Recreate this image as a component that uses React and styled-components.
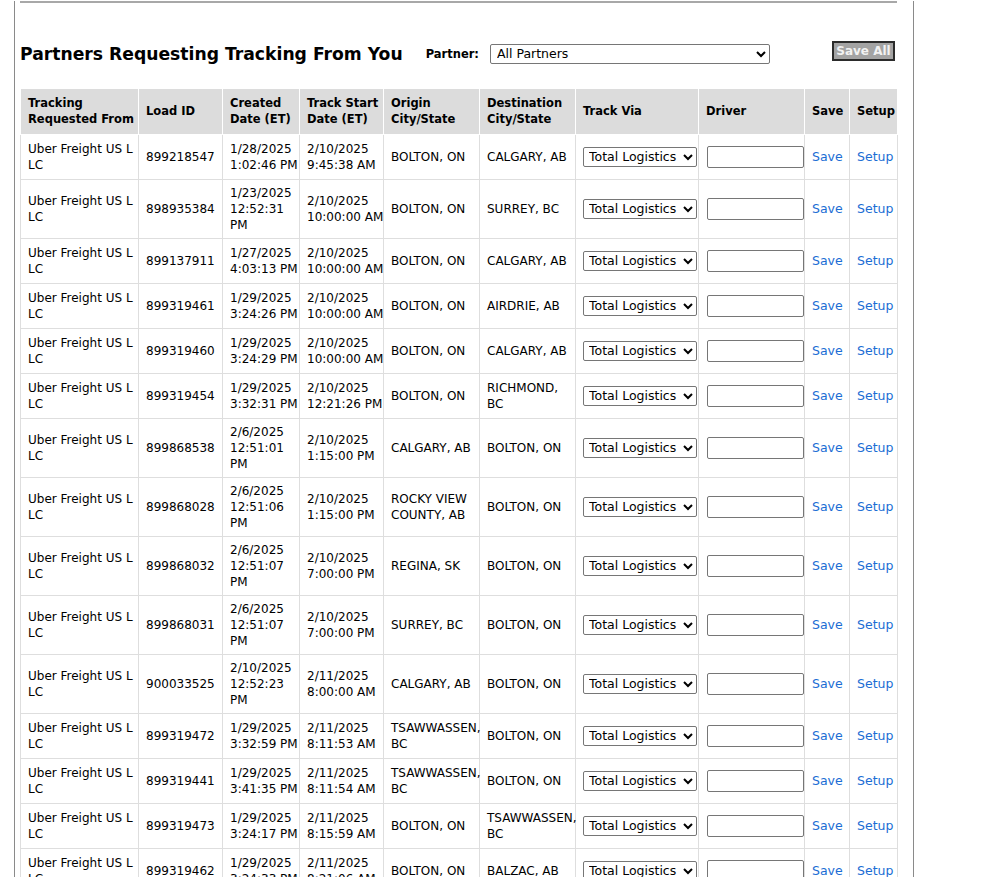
import React from 'react';
import styled, { createGlobalStyle } from 'styled-components';

const GlobalStyle = createGlobalStyle`
    body {
        margin: 0;
        background: #fff;
        font-family: "DejaVu Sans", Verdana, sans-serif;
        color: #000;
    }
`;

const Page = styled.div`
    width: 900px;
    min-height: 877px;
    box-sizing: border-box;
    margin-left: 14px;
    padding: 0 16px 0 5px;
    border-left: 1px solid #8a8a8a;
    border-right: 1px solid #8a8a8a;
`;

const Rule = styled.div`
    margin-top: 1px;
    border-top: 2px solid #a8a8a8;
`;

const Toolbar = styled.div`
    display: flex;
    align-items: center;
    height: 25px;
    margin-top: 38px;
`;

const Title = styled.h2`
    margin: 0 23px 0 0;
    font-size: 17.2px;
    font-weight: bold;
    white-space: nowrap;
`;

const PartnerLabel = styled.label`
    font-size: 11.5px;
    font-weight: bold;
    margin-right: 11px;
`;

const PartnerSelect = styled.select`
    width: 280px;
    height: 20px;
    padding: 0 2px;
    font-family: "DejaVu Sans", Verdana, sans-serif;
    font-size: 12.5px;
    color: #000;
    background: #fff;
    border: 1px solid #767676;
    border-radius: 2px;
`;

const SaveAllButton = styled.button`
    align-self: flex-start;
    margin: 0 2px 0 auto;
    width: 63px;
    height: 20px;
    padding: 0;
    font-family: "DejaVu Sans", Verdana, sans-serif;
    font-size: 12px;
    font-weight: bold;
    color: #f2f2f2;
    background: #a3a3a3;
    border: 2px solid #2b2b2b;
`;

const Table = styled.table`
    width: 877px;
    margin-top: 23px;
    border-collapse: collapse;
    table-layout: fixed;
    font-size: 12px;
    line-height: 16px;
`;

const HeadCell = styled.th`
    width: ${(p) => p.$w}px;
    box-sizing: border-box;
    height: 45px;
    padding: 0 4px 0 7px;
    text-align: left;
    font-size: 11.5px;
    font-weight: bold;
    background: #dcdcdc;
    border: 1px solid #fff;
    border-top: none;
    white-space: pre;
`;

const Cell = styled.td`
    height: 34px;
    padding: 5px 0 5px 7px;
    vertical-align: middle;
    border: 1px solid #dedede;
    white-space: pre;
`;

const CarrierSelect = styled.select`
    width: 114px;
    height: 20px;
    padding: 0 1px;
    font-family: "DejaVu Sans", Verdana, sans-serif;
    font-size: 12.5px;
    color: #000;
    background: #fff;
    border: 1px solid #767676;
    border-radius: 2px;
`;

const DriverInput = styled.input`
    box-sizing: border-box;
    width: 97px;
    height: 22px;
    margin-left: 1px;
    border: 1px solid #767676;
    border-radius: 2px;
`;

const ActionLink = styled.a`
    color: #1a6dd4;
    font-size: 12.5px;
    text-decoration: none;
    cursor: pointer;
`;

const columns = [
    ['Tracking\nRequested From', 118],
    ['Load ID', 84],
    ['Created\nDate (ET)', 77],
    ['Track Start\nDate (ET)', 84],
    ['Origin\nCity/State', 96],
    ['Destination\nCity/State', 96],
    ['Track Via', 123],
    ['Driver', 106],
    ['Save', 45],
    ['Setup', 48],
];

const rows = [
    ['899218547', '1/28/2025\n1:02:46 PM', '2/10/2025\n9:45:38 AM', 'BOLTON, ON', 'CALGARY, AB'],
    ['898935384', '1/23/2025\n12:52:31\nPM', '2/10/2025\n10:00:00 AM', 'BOLTON, ON', 'SURREY, BC'],
    ['899137911', '1/27/2025\n4:03:13 PM', '2/10/2025\n10:00:00 AM', 'BOLTON, ON', 'CALGARY, AB'],
    ['899319461', '1/29/2025\n3:24:26 PM', '2/10/2025\n10:00:00 AM', 'BOLTON, ON', 'AIRDRIE, AB'],
    ['899319460', '1/29/2025\n3:24:29 PM', '2/10/2025\n10:00:00 AM', 'BOLTON, ON', 'CALGARY, AB'],
    ['899319454', '1/29/2025\n3:32:31 PM', '2/10/2025\n12:21:26 PM', 'BOLTON, ON', 'RICHMOND,\nBC'],
    ['899868538', '2/6/2025\n12:51:01\nPM', '2/10/2025\n1:15:00 PM', 'CALGARY, AB', 'BOLTON, ON'],
    ['899868028', '2/6/2025\n12:51:06\nPM', '2/10/2025\n1:15:00 PM', 'ROCKY VIEW\nCOUNTY, AB', 'BOLTON, ON'],
    ['899868032', '2/6/2025\n12:51:07\nPM', '2/10/2025\n7:00:00 PM', 'REGINA, SK', 'BOLTON, ON'],
    ['899868031', '2/6/2025\n12:51:07\nPM', '2/10/2025\n7:00:00 PM', 'SURREY, BC', 'BOLTON, ON'],
    ['900033525', '2/10/2025\n12:52:23\nPM', '2/11/2025\n8:00:00 AM', 'CALGARY, AB', 'BOLTON, ON'],
    ['899319472', '1/29/2025\n3:32:59 PM', '2/11/2025\n8:11:53 AM', 'TSAWWASSEN,\nBC', 'BOLTON, ON'],
    ['899319441', '1/29/2025\n3:41:35 PM', '2/11/2025\n8:11:54 AM', 'TSAWWASSEN,\nBC', 'BOLTON, ON'],
    ['899319473', '1/29/2025\n3:24:17 PM', '2/11/2025\n8:15:59 AM', 'BOLTON, ON', 'TSAWWASSEN,\nBC'],
    ['899319462', '1/29/2025\n3:24:33 PM', '2/11/2025\n8:21:06 AM', 'BOLTON, ON', 'BALZAC, AB'],
];

const App = () => {
    return (
        <>
            <GlobalStyle />
            <Page>
                <Rule />
                <Toolbar>
                    <Title>Partners Requesting Tracking From You</Title>
                    <PartnerLabel>Partner:</PartnerLabel>
                    <PartnerSelect defaultValue="all">
                        <option value="all">All Partners</option>
                    </PartnerSelect>
                    <SaveAllButton>Save All</SaveAllButton>
                </Toolbar>
                <Table>
                    <thead>
                        <tr>
                            {columns.map(([label, w]) => (
                                <HeadCell key={label} $w={w}>{label}</HeadCell>
                            ))}
                        </tr>
                    </thead>
                    <tbody>
                        {rows.map(([loadId, created, start, origin, dest]) => (
                            <tr key={loadId}>
                                <Cell>{'Uber Freight US L\nLC'}</Cell>
                                <Cell>{loadId}</Cell>
                                <Cell>{created}</Cell>
                                <Cell>{start}</Cell>
                                <Cell>{origin}</Cell>
                                <Cell>{dest}</Cell>
                                <Cell>
                                    <CarrierSelect defaultValue="total">
                                        <option value="total">Total Logistics</option>
                                    </CarrierSelect>
                                </Cell>
                                <Cell>
                                    <DriverInput type="text" />
                                </Cell>
                                <Cell><ActionLink>Save</ActionLink></Cell>
                                <Cell><ActionLink>Setup</ActionLink></Cell>
                            </tr>
                        ))}
                    </tbody>
                </Table>
            </Page>
        </>
    );
};

export default App;
